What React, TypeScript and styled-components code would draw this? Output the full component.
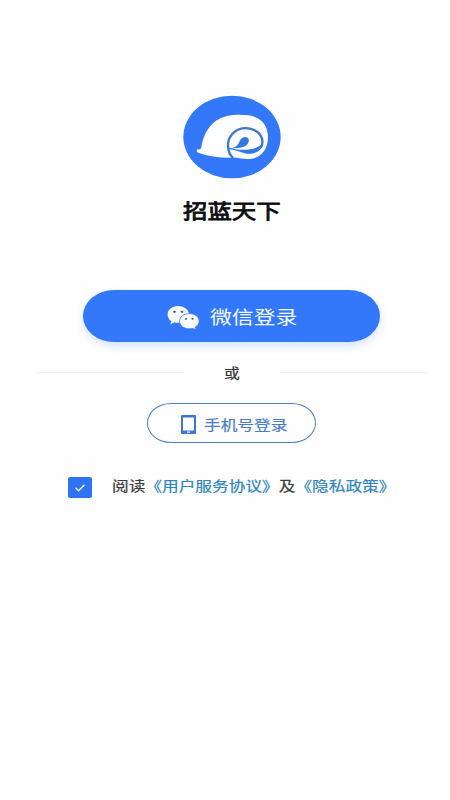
import React from 'react';
import styled, { createGlobalStyle } from 'styled-components';

const GlobalStyle = createGlobalStyle`
  * { box-sizing: border-box; }
  body { margin: 0; background: #fefefe; }
`;

const Screen = styled.main`
  width: 450px;
  height: 800px;
  overflow: hidden;
  display: flex;
  flex-direction: column;
  align-items: flex-start;
  background: #fefefe;
  font-family: "Noto Sans CJK SC", sans-serif;
`;

const Brand = styled.header`
  width: 464px;
  margin-top: 95px;
  display: flex;
  flex-direction: column;
  align-items: center;
`;

const Logo = styled.svg`
  display: block;
  width: 100px;
  height: 84px;
`;

/* Glyphs are wider than they are tall across the whole screen. */
const WideText = styled.span<{ $size: number; $width: number; $stroke?: number }>`
  display: block;
  flex: none;
  width: ${p => p.$width}px;
  font-size: ${p => p.$size}px;
  font-weight: 400;
  -webkit-text-stroke: ${p => p.$stroke ?? 0}px currentColor;
  line-height: 1.5;
  text-align: left;
  white-space: nowrap;
  transform: scaleX(1.175);
  transform-origin: left center;
`;

const Title = styled.h1`
  margin: 16px 0 0;
  height: 32px;
  display: flex;
  align-items: center;
  color: #0c0c0e;
`;

const WechatButton = styled.button`
  width: 297px;
  height: 52px;
  margin: 63px 0 0 83px;
  padding: 0 0 0 84px;
  display: flex;
  align-items: center;
  gap: 10px;
  border: 0;
  border-radius: 31px / 26px;
  background: #3377fb;
  box-shadow: 0 4px 8px rgba(51, 119, 251, 0.2);
  color: #f3faff;
  font-family: inherit;
`;

const WechatIcon = styled.svg`
  flex: none;
  width: 33px;
  height: 25px;
  margin-top: 3px;
`;

const Divider = styled.div`
  width: 390px;
  height: 24px;
  margin: 18px 0 0 37px;
  display: flex;
  align-items: center;
  justify-content: space-between;
  color: #333;
`;

const Rule = styled.span`
  width: 147px;
  height: 1px;
  background: #f0f0f0;
`;

const PhoneButton = styled.button`
  width: 169px;
  height: 40px;
  margin: 19px 0 0 147px;
  padding: 3px 0 0 32px;
  display: flex;
  align-items: center;
  gap: 7px;
  border: 1px solid #4f7fbe;
  border-radius: 24px / 20px;
  background: #fefefe;
  color: #4a7fc4;
  font-family: inherit;
`;

const PhoneIcon = styled.svg`
  flex: none;
  width: 17px;
  height: 21px;
`;

const Agreement = styled.label`
  height: 24px;
  margin: 31px 0 0 68px;
  display: flex;
  align-items: center;
  gap: 20px;
  color: #3b3b3b;
`;

const Checkbox = styled.span`
  flex: none;
  width: 24px;
  height: 21px;
  margin-top: 3px;
  display: flex;
  align-items: center;
  justify-content: center;
  border-radius: 2px;
  background: #3073f2;
`;

const PolicyLink = styled.a`
  color: #2f86bd;
`;

export default function App() {
  return (
    <>
      <GlobalStyle />
      <Screen>
        <Brand>
          <Logo viewBox="36 30 300 252" preserveAspectRatio="none">
            <ellipse cx="186" cy="156" rx="146" ry="124" fill="#3478fa" />
            <path
              d="M83 193Q91 195 94 188C98 159 111 127 137 108C165 88 205 87 235 91C272 96 294 119 294 156C294 195 271 222 233 222C211 222 198 216 187 218C152 219 115 214 84 203C79 201 79 194 83 193Z"
              fill="#fdfeff"
            />
            <path
              d="M189 219C171 202 169 168 185 149C202 128 231 125 252 135C276 146 283 170 272 188"
              fill="none"
              stroke="#3c76c8"
              strokeWidth="7"
            />
            <path
              d="M180 190C196 188 204 181 208 170C213 156 225 153 233 158C240 164 236 176 227 182C213 190 195 190 180 190Z"
              fill="#3478e5"
            />
            <path d="M178 188C221 200 250 195 280 178C272 201 250 209 230 206C215 204 203 196 178 193Z" fill="#3478e5" />
          </Logo>
          <Title>
            <WideText $size={20.8} $width={98} $stroke={0.8}>招蓝天下</WideText>
          </Title>
        </Brand>

        <WechatButton>
          <WechatIcon viewBox="0 0 33 24" preserveAspectRatio="none">
            <path
              d="M11 1C5 1 .6 4.5 .6 9c0 2.7 1.5 5 3.9 6.4L3.3 18.6l4-2.1c1.2.3 2.4.5 3.7.5 6 0 11-3.5 11-8S17 1 11 1Z"
              fill="#fafdff"
            />
            <path
              d="M22.5 8.2c-5.5 0-10 3.2-10 7.4s4.5 7.3 10 7.3c1.2 0 2.3-.1 3.3-.4l3.5 1.3-.9-2.8c2.3-1.3 3.8-3.2 3.8-5.4 0-4.2-4.3-7.4-9.7-7.4Z"
              fill="#fafdff"
              stroke="#3377fb"
              strokeWidth=".8"
            />
            <g fill="#345f9f">
              <ellipse cx="7.5" cy="6.5" rx="1.4" ry="1.1" />
              <ellipse cx="15" cy="6.5" rx="1.4" ry="1.1" />
              <ellipse cx="19" cy="13.3" rx="1.2" ry=".9" />
              <ellipse cx="25.5" cy="13.3" rx="1.2" ry=".9" />
            </g>
          </WechatIcon>
          <WideText $size={18.6} $width={88}>微信登录</WideText>
        </WechatButton>

        <Divider>
          <Rule />
          <WideText $size={13.4} $width={16} $stroke={0.2}>或</WideText>
          <Rule />
        </Divider>

        <PhoneButton>
          <PhoneIcon viewBox="0 0 17 21">
            <path d="M2 1h13q1 0 1 1v17q0 1-1 1H2q-1 0-1-1V2q0-1 1-1ZM3 3.5v13h11v-13ZM7 17.5v1.2h3v-1.2Z" fill="#3d75d5" fillRule="evenodd" />
          </PhoneIcon>
          <WideText $size={14.2} $width={83} $stroke={0.2}>手机号登录</WideText>
        </PhoneButton>

        <Agreement>
          <Checkbox>
            <svg width="12" height="10" viewBox="0 0 12 10">
              <path d="M1.5 4.8 4.6 7.8 10.5 1.8" fill="none" stroke="#e6f3ff" strokeWidth="1.5" />
            </svg>
          </Checkbox>
          <WideText $size={14.2} $width={283} $stroke={0.2}>
            阅读<PolicyLink>《用户服务协议》</PolicyLink>及<PolicyLink>《隐私政策》</PolicyLink>
          </WideText>
        </Agreement>
      </Screen>
    </>
  );
}
